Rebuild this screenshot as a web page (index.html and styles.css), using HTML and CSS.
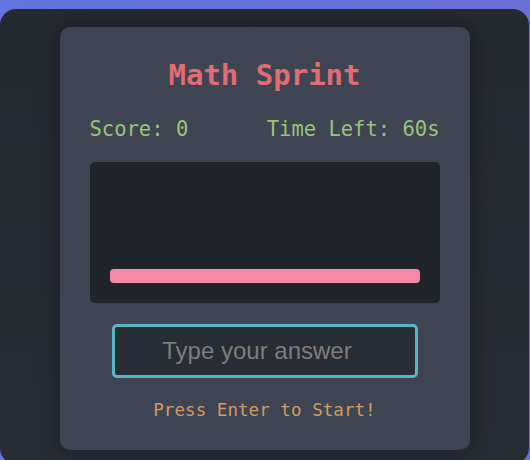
FILE: index.html
```html
<!DOCTYPE html>
<html>
<head>
<meta charset="utf-8">
<link rel="stylesheet" href="styles.css">
</head>
<body>
<div class="panel">
  <div class="card">
    <h1 class="title">Math Sprint</h1>
    <div class="stats">
      <span>Score: 0</span>
      <span>Time Left: 60s</span>
    </div>
    <div class="game">
      <div class="bar"></div>
    </div>
    <input class="answer" type="text" placeholder="Type your answer">
    <div class="message">Press Enter to Start!</div>
  </div>
</div>
</body>
</html>
```
FILE: styles.css
```css
html {
  background: linear-gradient(90deg, #6574de, #6a6fd6);
  height: 100%;
}
body {
  margin: 0;
  padding-top: 9px;
  overflow: hidden;
  height: 100%;
  box-sizing: border-box;
}
.panel {
  background: linear-gradient(180deg, #252930, #282c34);
  border-radius: 16px;
  height: 455px;
  display: flex;
  justify-content: center;
  padding-top: 18px;
  box-sizing: border-box;
  margin-right: 1px;
}
.card {
  width: 410px;
  height: 423px;
  box-sizing: border-box;
  padding: 30px;
  background: #3e4451;
  border-radius: 10px;
  box-shadow: 0 0 20px rgba(0, 0, 0, 0.35);
  display: flex;
  flex-direction: column;
  align-items: stretch;
  font-family: "DejaVu Sans Mono", monospace;
}
.title {
  margin: 0;
  font-size: 29px;
  line-height: 36px;
  font-weight: bold;
  color: #e06c75;
  text-align: center;
}
.stats {
  margin-top: 24px;
  display: flex;
  justify-content: space-between;
  font-size: 20.5px;
  line-height: 24px;
  color: #98c379;
}
.game {
  margin-top: 21px;
  height: 141px;
  background: #21252b;
  border-radius: 5px;
  padding: 0 20px 20px;
  box-sizing: border-box;
  display: flex;
  flex-direction: column;
  justify-content: flex-end;
}
.bar {
  height: 14.5px;
  background: #f48aa8;
  border-radius: 4px;
}
.answer {
  margin: 21px auto 0;
  width: 306px;
  height: 54px;
  box-sizing: border-box;
  border: 3px solid #56b6c2;
  border-radius: 5px;
  background: #282c34;
  font-family: "Liberation Sans", Arial, sans-serif;
  font-size: 24px;
  text-align: center;
  color: #dddddd;
  outline: none;
  padding: 0 15px 0 0;
}
.answer::placeholder {
  color: #7d7d7d;
}
.message {
  margin-top: 22px;
  font-size: 17.6px;
  line-height: 20px;
  color: #d19a66;
  text-align: center;
}
```
